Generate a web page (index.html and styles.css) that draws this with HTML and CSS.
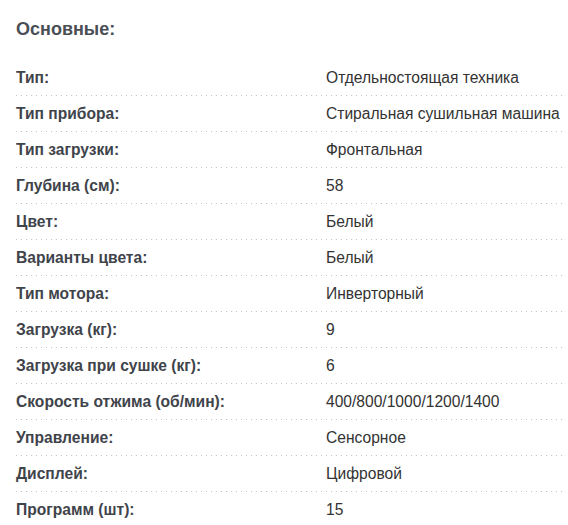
FILE: index.html
```html
<!DOCTYPE html>
<html lang="ru">
<head>
<meta charset="utf-8">
<link rel="stylesheet" href="styles.css">
</head>
<body>
<div class="specs">
  <h3 class="specs-title">Основные:</h3>
  <dl class="specs-list">
    <div class="row"><dt>Тип:</dt><dd>Отдельностоящая техника</dd></div>
    <div class="row"><dt>Тип прибора:</dt><dd>Стиральная сушильная машина</dd></div>
    <div class="row"><dt>Тип загрузки:</dt><dd>Фронтальная</dd></div>
    <div class="row"><dt>Глубина (см):</dt><dd>58</dd></div>
    <div class="row"><dt>Цвет:</dt><dd>Белый</dd></div>
    <div class="row"><dt>Варианты цвета:</dt><dd>Белый</dd></div>
    <div class="row"><dt>Тип мотора:</dt><dd>Инверторный</dd></div>
    <div class="row"><dt>Загрузка (кг):</dt><dd>9</dd></div>
    <div class="row"><dt>Загрузка при сушке (кг):</dt><dd>6</dd></div>
    <div class="row"><dt>Скорость отжима (об/мин):</dt><dd>400/800/1000/1200/1400</dd></div>
    <div class="row"><dt>Управление:</dt><dd>Сенсорное</dd></div>
    <div class="row"><dt>Дисплей:</dt><dd>Цифровой</dd></div>
    <div class="row"><dt>Программ (шт):</dt><dd>15</dd></div>
  </dl>
</div>
</body>
</html>
```
FILE: styles.css
```css
html, body {
  margin: 0;
  padding: 0;
  background: #fff;
}
body {
  font-family: "Liberation Sans", Arial, sans-serif;
}
.specs {
  padding: 18px 3px 0 16px;
}
.specs-title {
  margin: 0 0 20px;
  font-size: 18px;
  line-height: 22px;
  font-weight: bold;
  color: #4a4f56;
}
.specs-list {
  margin: 0;
  padding: 0;
}
.row {
  display: flex;
  align-items: center;
  height: 35px;
  background-image: linear-gradient(to right, #c4c4c4 1px, transparent 1px);
  background-size: 5px 1px;
  background-repeat: repeat-x;
  background-position: 0 100%;
  padding-bottom: 1px;
  box-sizing: content-box;
}
.row dt {
  width: 310px;
  flex: none;
  font-size: 15.6px;
  font-weight: bold;
  color: #3f444b;
}
.row dd {
  margin: 0;
  font-size: 15.6px;
  color: #333;
}
```
